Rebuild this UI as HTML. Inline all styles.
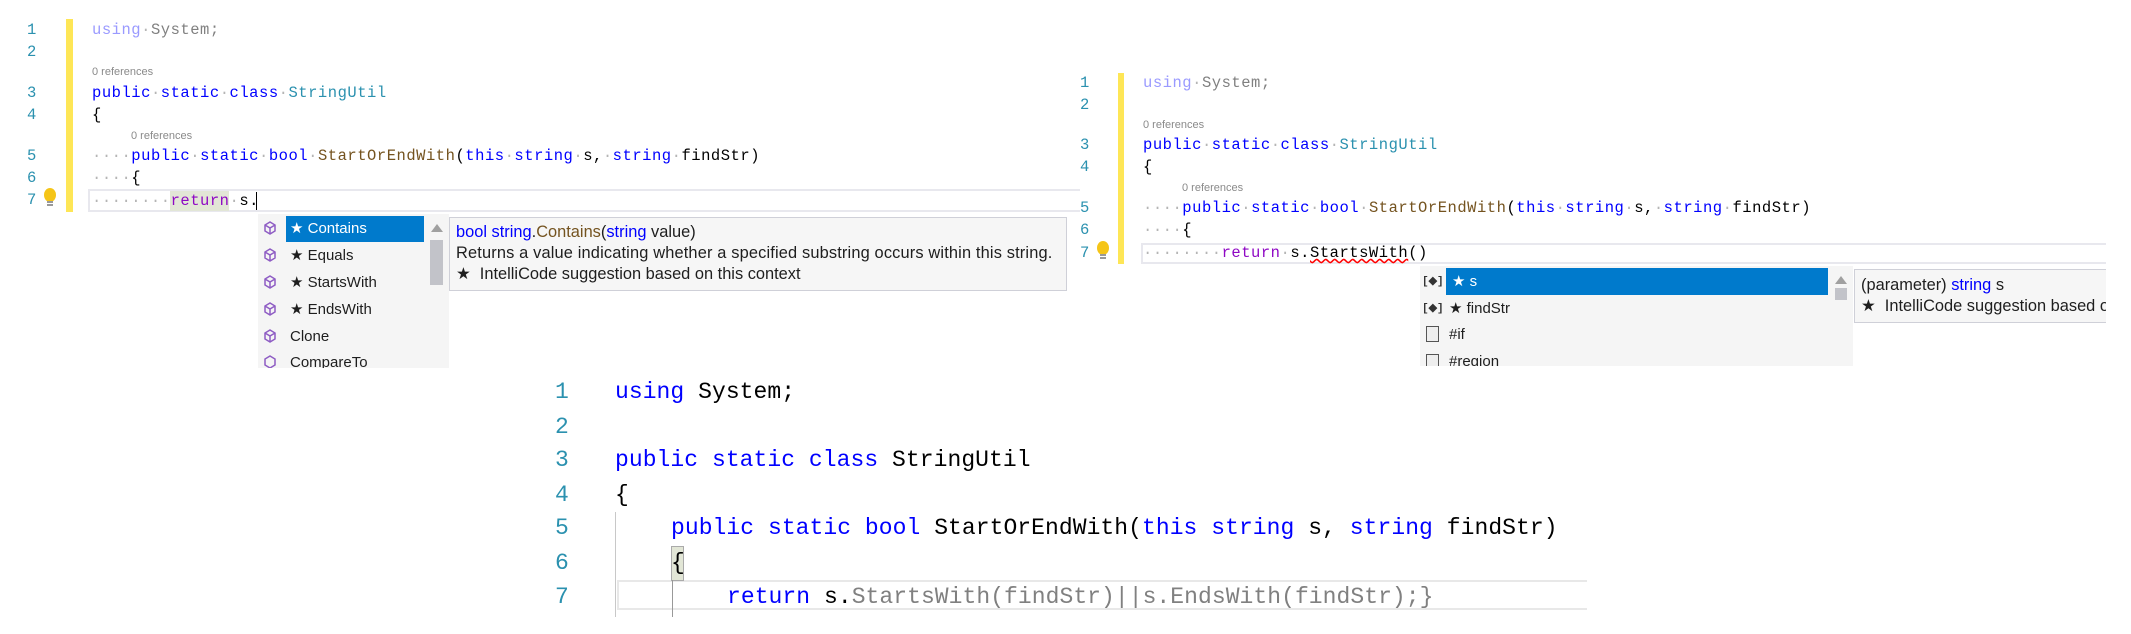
<!DOCTYPE html>
<html><head><meta charset="utf-8">
<style>
body{margin:0;width:2131px;height:634px;background:#fff;position:relative;overflow:hidden;font-family:"Liberation Sans",sans-serif}
.a{position:absolute;white-space:pre}
.m{font-family:"Liberation Mono",monospace;font-size:15.5px;line-height:20px;letter-spacing:0.52px}
.n{color:#2b91af;font-family:"Liberation Mono",monospace;font-size:15.5px;line-height:20px}
.ref{font-size:11px;color:#8a8a8a;line-height:14px}
.k{color:#0000ff}.t{color:#2b91af}.d{color:#b5b5b5}.mt{color:#74531f}.r{color:#8f08c4}.u{color:#9a9aff}.g{color:#808080}
.ui{font-size:15px;line-height:20px;color:#1e1e1e}
.tt{font-size:16.4px;line-height:20px;color:#1e1e1e}
.b{position:absolute;background:#007acc}
.big{font-family:"Liberation Mono",monospace;font-size:23px;line-height:30px;color:#000;letter-spacing:0.05px}
</style></head><body>
<!-- top-left panel -->
<div class="a" style="left:66px;top:19px;width:7px;height:193px;background:#fee656"></div>
<div class="a n" style="left:27px;top:20px">1</div>
<div class="a n" style="left:27px;top:42px">2</div>
<div class="a n" style="left:27px;top:83px">3</div>
<div class="a n" style="left:27px;top:105px">4</div>
<div class="a n" style="left:27px;top:146px">5</div>
<div class="a n" style="left:27px;top:168px">6</div>
<div class="a n" style="left:27px;top:190px">7</div>
<div class="a" style="left:88px;top:189px;width:990px;height:19px;border:2px solid #e8e8ee;border-right:none"></div>
<div class="a" style="left:170px;top:191px;width:59px;height:20px;background:#e2e6d6"></div>
<div class="a m" style="left:92px;top:20px"><span class="u">using</span><span class="d">·</span><span class="g">System;</span></div>
<div class="a ref" style="left:92px;top:65px">0 references</div>
<div class="a m" style="left:92px;top:83px"><span class="k">public</span><span class="d">·</span><span class="k">static</span><span class="d">·</span><span class="k">class</span><span class="d">·</span><span class="t">StringUtil</span></div>
<div class="a m" style="left:92px;top:105px">{</div>
<div class="a ref" style="left:131px;top:129px">0 references</div>
<div class="a m" style="left:92px;top:146px"><span class="d">····</span><span class="k">public</span><span class="d">·</span><span class="k">static</span><span class="d">·</span><span class="k">bool</span><span class="d">·</span><span class="mt">StartOrEndWith</span>(<span class="k">this</span><span class="d">·</span><span class="k">string</span><span class="d">·</span>s,<span class="d">·</span><span class="k">string</span><span class="d">·</span>findStr)</div>
<div class="a m" style="left:92px;top:168px"><span class="d">····</span>{</div>
<div class="a m" style="left:92px;top:191px"><span class="d">········</span><span class="r">return</span><span class="d">·</span>s.</div>
<div class="a" style="left:256px;top:192px;width:1px;height:18px;background:#000"></div>
<svg class="a" style="left:42px;top:187px" width="16" height="26"><ellipse cx="8" cy="8" rx="6" ry="7" fill="#f5c518"/><rect x="5" y="14" width="6" height="2" fill="#999"/><rect x="5" y="17" width="6" height="2" fill="#999"/></svg>
<!-- completion list 1 -->
<div class="a" style="left:258px;top:214px;width:191px;height:154px;background:#f5f5f5"></div>
<div class="b" style="left:286px;top:216px;width:138px;height:26px"></div>
<div class="a" style="left:430px;top:240px;width:13px;height:45px;background:#c2c3c9"></div>
<div class="a" style="left:431px;top:224px;width:0;height:0;border-left:6px solid transparent;border-right:6px solid transparent;border-bottom:8px solid #a0a0a0"></div>
<div class="a ui" style="left:290px;top:219px;color:#fff">★ Contains</div>
<div class="a ui" style="left:290px;top:246px">★ Equals</div>
<div class="a ui" style="left:290px;top:273px">★ StartsWith</div>
<div class="a ui" style="left:290px;top:300px">★ EndsWith</div>
<div class="a ui" style="left:290px;top:327px">Clone</div>
<div class="a ui" style="left:290px;top:353px">CompareTo</div>
<svg class="a" style="left:262px;top:220px" width="16" height="150"><g fill="none" stroke="#8e5cc4" stroke-width="1.5"><path d="M8 2l5 3v6l-5 3-5-3V5z M3 5l5 3 5-3 M8 8v6"/><path transform="translate(0,27)" d="M8 2l5 3v6l-5 3-5-3V5z M3 5l5 3 5-3 M8 8v6"/><path transform="translate(0,54)" d="M8 2l5 3v6l-5 3-5-3V5z M3 5l5 3 5-3 M8 8v6"/><path transform="translate(0,81)" d="M8 2l5 3v6l-5 3-5-3V5z M3 5l5 3 5-3 M8 8v6"/><path transform="translate(0,108)" d="M8 2l5 3v6l-5 3-5-3V5z M3 5l5 3 5-3 M8 8v6"/><path transform="translate(0,134)" d="M8 2l5 3v6l-5 3-5-3V5z"/></g></svg>
<div class="a" style="left:449px;top:217px;width:616px;height:72px;background:#f6f6f6;border:1px solid #cfd0d8"></div>
<div class="a tt" style="left:456px;top:222px"><span class="k">bool string</span>.<span class="mt">Contains</span>(<span class="k">string</span> value)</div>
<div class="a tt" style="left:456px;top:243px;letter-spacing:0.15px">Returns a value indicating whether a specified substring occurs within this string.</div>
<div class="a tt" style="left:456px;top:264px">★  IntelliCode suggestion based on this context</div>
<div class="a" style="left:0;top:368px;width:1080px;height:10px;background:#fff"></div>

<!-- top-right panel -->
<div class="a" style="left:1118px;top:73px;width:6px;height:191px;background:#fee656"></div>
<div class="a n" style="left:1080px;top:73px">1</div>
<div class="a n" style="left:1080px;top:95px">2</div>
<div class="a n" style="left:1080px;top:135px">3</div>
<div class="a n" style="left:1080px;top:157px">4</div>
<div class="a n" style="left:1080px;top:198px">5</div>
<div class="a n" style="left:1080px;top:220px">6</div>
<div class="a n" style="left:1080px;top:243px">7</div>
<div class="a" style="left:1141px;top:243px;width:970px;height:17px;border:2px solid #e8e8ee;border-right:none"></div>
<div class="a m" style="left:1143px;top:73px"><span class="u">using</span><span class="d">·</span><span class="g">System;</span></div>
<div class="a ref" style="left:1143px;top:118px">0 references</div>
<div class="a m" style="left:1143px;top:135px"><span class="k">public</span><span class="d">·</span><span class="k">static</span><span class="d">·</span><span class="k">class</span><span class="d">·</span><span class="t">StringUtil</span></div>
<div class="a m" style="left:1143px;top:157px">{</div>
<div class="a ref" style="left:1182px;top:181px">0 references</div>
<div class="a m" style="left:1143px;top:198px"><span class="d">····</span><span class="k">public</span><span class="d">·</span><span class="k">static</span><span class="d">·</span><span class="k">bool</span><span class="d">·</span><span class="mt">StartOrEndWith</span>(<span class="k">this</span><span class="d">·</span><span class="k">string</span><span class="d">·</span>s,<span class="d">·</span><span class="k">string</span><span class="d">·</span>findStr)</div>
<div class="a m" style="left:1143px;top:220px"><span class="d">····</span>{</div>
<div class="a m" style="left:1143px;top:243px"><span class="d">········</span><span class="r">return</span><span class="d">·</span>s.<span style="text-decoration:underline wavy red">StartsWith</span>()</div>
<svg class="a" style="left:1095px;top:240px" width="16" height="26"><ellipse cx="8" cy="8" rx="6" ry="7" fill="#f5c518"/><rect x="5" y="14" width="6" height="2" fill="#999"/><rect x="5" y="17" width="6" height="2" fill="#999"/></svg>
<div class="a" style="left:1420px;top:266px;width:433px;height:102px;background:#f5f5f5"></div>
<div class="b" style="left:1446px;top:268px;width:382px;height:27px"></div>
<div class="a" style="left:1835px;top:288px;width:12px;height:12px;background:#c2c3c9"></div>
<div class="a" style="left:1835px;top:276px;width:0;height:0;border-left:6px solid transparent;border-right:6px solid transparent;border-bottom:8px solid #a0a0a0"></div>
<div class="a ui" style="left:1452px;top:272px;color:#fff">★ s</div>
<div class="a ui" style="left:1449px;top:299px">★ findStr</div>
<div class="a ui" style="left:1449px;top:325px">#if</div>
<div class="a ui" style="left:1449px;top:352px">#region</div>
<div class="a" style="left:1422px;top:274px;font:bold 11px 'Liberation Mono',monospace;color:#333">[◆]</div>
<div class="a" style="left:1422px;top:301px;font:bold 11px 'Liberation Mono',monospace;color:#333">[◆]</div>
<div class="a" style="left:1426px;top:326px;width:11px;height:14px;border:1px solid #555;background:#eee"></div>
<div class="a" style="left:1426px;top:354px;width:11px;height:12px;border:1px solid #555;border-bottom:none;background:#eee"></div>
<div class="a" style="left:1854px;top:269px;width:260px;height:52px;background:#f6f6f6;border:1px solid #cfd0d8;border-right:none"></div>
<div class="a tt" style="left:1861px;top:275px">(parameter) <span class="k">string</span> s</div>
<div class="a tt" style="left:1861px;top:296px">★  IntelliCode suggestion based on this context</div>
<div class="a" style="left:2106px;top:60px;width:25px;height:320px;background:#fff"></div>
<div class="a" style="left:1080px;top:366px;width:1051px;height:10px;background:#fff"></div>

<!-- bottom panel -->
<div class="a big" style="left:555px;top:377px;color:#2b91af">1</div>
<div class="a big" style="left:555px;top:412px;color:#2b91af">2</div>
<div class="a big" style="left:555px;top:445px;color:#2b91af">3</div>
<div class="a big" style="left:555px;top:480px;color:#2b91af">4</div>
<div class="a big" style="left:555px;top:513px;color:#2b91af">5</div>
<div class="a big" style="left:555px;top:548px;color:#2b91af">6</div>
<div class="a big" style="left:555px;top:582px;color:#2b91af">7</div>
<div class="a" style="left:615px;top:512px;width:1px;height:105px;background:#c8c8c8"></div>
<div class="a" style="left:617px;top:580px;width:968px;height:26px;border:2px solid #e8e8e8;border-right:none"></div>
<div class="a" style="left:671px;top:546px;width:11px;height:33px;background:#e2e6d6;border:1px solid #aaa"></div>
<div class="a" style="left:672px;top:580px;width:1px;height:37px;background:#999"></div>
<div class="a big" style="left:615px;top:377px"><span class="k">using</span> System;</div>
<div class="a big" style="left:615px;top:445px"><span class="k">public static class</span> StringUtil</div>
<div class="a big" style="left:615px;top:480px">{</div>
<div class="a big" style="left:671px;top:513px"><span class="k">public static bool</span> StartOrEndWith(<span class="k">this string</span> s, <span class="k">string</span> findStr)</div>
<div class="a big" style="left:671px;top:548px">{</div>
<div class="a big" style="left:727px;top:582px"><span class="k">return</span> s.<span class="g">StartsWith(findStr)||s.EndsWith(findStr);}</span></div>
</body></html>
